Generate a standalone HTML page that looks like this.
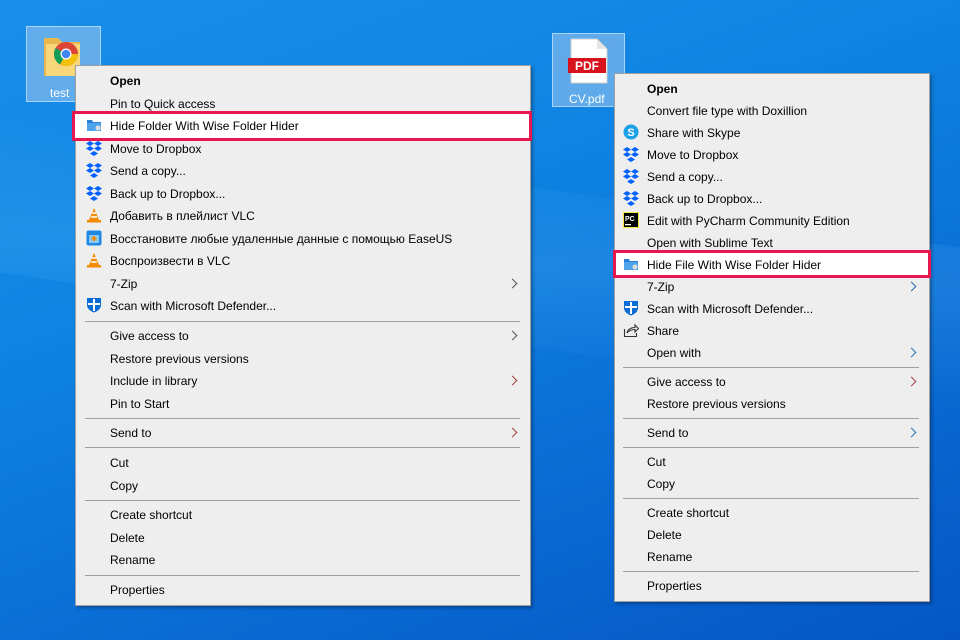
<!DOCTYPE html>
<html><head><meta charset="utf-8"><style>
*{margin:0;padding:0;box-sizing:border-box}
body{width:960px;height:640px;overflow:hidden;position:relative;font-family:"Liberation Sans",sans-serif;font-size:12px;color:#000;
background:linear-gradient(160deg,#1a8ee8 0%,#0f84e2 35%,#0a6fd6 65%,#0556c4 100%)}
.ray{position:absolute;left:0;top:180px;width:960px;height:160px;background:linear-gradient(175deg,rgba(120,200,255,0) 0%,rgba(120,200,255,.15) 50%,rgba(120,200,255,0) 100%);transform:skewY(8deg)}
.menu{position:absolute;background:#eeeeee;border:1px solid #a0a0a0;box-shadow:2px 2px 3px rgba(0,0,0,.3)}
.t{position:absolute;line-height:22px;padding-top:1px;white-space:nowrap}
.sep{position:absolute;height:1px;background:#a0a0a0}
.hl{position:absolute;border:3px solid #e8174f;background:#fff}
.ic{position:absolute;width:16px;height:16px}
.arr{position:absolute;width:7px;height:7px;border-top:1.3px solid #555;border-right:1.3px solid #555;transform:rotate(45deg)}
.sel{position:absolute;background:rgba(160,200,240,.55);border:1px solid rgba(200,230,255,.7)}
.lbl{position:absolute;color:#fff;font-size:12px;text-align:center}
</style></head><body>
<div class="ray"></div>

<div class="sel" style="left:26px;top:26px;width:75px;height:76px"></div>
<svg style="position:absolute;left:42px;top:30px" width="42" height="48"><path d="M2 8h14l4 4h18v34H2z" fill="#e9b94d"/><path d="M4 14h34v32H4z" fill="#f8d77a"/><circle cx="24" cy="24" r="12" fill="#db4437"/><path d="M24 24 L36 24 A12 12 0 0 1 18 34.4Z" fill="#f4c20d"/><path d="M24 24 L18 34.4 A12 12 0 0 1 13.6 18Z" fill="#0f9d58"/><circle cx="24" cy="24" r="5.5" fill="#fff"/><circle cx="24" cy="24" r="4.3" fill="#4285f4"/></svg>
<div class="lbl" style="left:50px;top:86px">test</div>

<div class="sel" style="left:552px;top:33px;width:73px;height:74px"></div>
<svg style="position:absolute;left:568px;top:38px" width="42" height="46"><path d="M3 1h26l10 10v34H3z" fill="#fff" stroke="#ccc"/><path d="M29 1v10h10" fill="#e5e5e5"/><rect x="0" y="20" width="38" height="15" fill="#d8121c"/><text x="19" y="32" fill="#fff" font-family="Liberation Sans" font-weight="bold" font-size="12" text-anchor="middle">PDF</text></svg>
<div class="lbl" style="left:569px;top:92px">CV.pdf</div>

<div class="menu" style="left:75px;top:65px;width:456px;height:541px"></div>
<div class="hl" style="left:72px;top:111px;width:460px;height:30px"></div>
<div class="t" style="left:110px;top:69px;font-weight:bold">Open</div>
<div class="t" style="left:110px;top:92px">Pin to Quick access</div>
<div class="t" style="left:110px;top:114px">Hide Folder With Wise Folder Hider</div>
<div class="t" style="left:110px;top:137px">Move to Dropbox</div>
<div class="t" style="left:110px;top:159px">Send a copy...</div>
<div class="t" style="left:110px;top:182px">Back up to Dropbox...</div>
<div class="t" style="left:110px;top:204px">Добавить в плейлист VLC</div>
<div class="t" style="left:110px;top:227px">Восстановите любые удаленные данные с помощью EaseUS</div>
<div class="t" style="left:110px;top:249px">Воспроизвести в VLC</div>
<div class="t" style="left:110px;top:272px">7-Zip</div>
<div class="t" style="left:110px;top:294px">Scan with Microsoft Defender...</div>
<div class="sep" style="left:85px;top:321px;width:435px"></div>
<div class="t" style="left:110px;top:324px">Give access to</div>
<div class="t" style="left:110px;top:347px">Restore previous versions</div>
<div class="t" style="left:110px;top:369px">Include in library</div>
<div class="t" style="left:110px;top:392px">Pin to Start</div>
<div class="sep" style="left:85px;top:418px;width:435px"></div>
<div class="t" style="left:110px;top:421px">Send to</div>
<div class="sep" style="left:85px;top:447px;width:435px"></div>
<div class="t" style="left:110px;top:451px">Cut</div>
<div class="t" style="left:110px;top:474px">Copy</div>
<div class="sep" style="left:85px;top:500px;width:435px"></div>
<div class="t" style="left:110px;top:503px">Create shortcut</div>
<div class="t" style="left:110px;top:526px">Delete</div>
<div class="t" style="left:110px;top:548px">Rename</div>
<div class="sep" style="left:85px;top:575px;width:435px"></div>
<div class="t" style="left:110px;top:578px">Properties</div>
<div class="arr" style="left:509px;top:280px"></div>
<div class="arr" style="left:509px;top:332px"></div>
<div class="arr" style="left:509px;top:377px;border-color:#a04040"></div>
<div class="arr" style="left:509px;top:429px;border-color:#a04040"></div>

<svg class="ic" style="left:86px;top:117px" viewBox="0 0 16 16"><path d="M1 3h5l1 2h8v9H1z" fill="#2a7fd4"/><path d="M1 6h14v8H1z" fill="#4fa3ea"/><circle cx="12" cy="11" r="2.5" fill="#ddd"/></svg>
<svg class="ic" style="left:86px;top:140px" viewBox="0 0 16 16"><g fill="#0061fe"><path d="M4 1l4 2.5-4 2.5-4-2.5zM12 1l4 2.5-4 2.5-4-2.5zM4 6l4 2.5-4 2.5-4-2.5zM12 6l4 2.5-4 2.5-4-2.5zM8 11l4 2.5-4 2.5-4-2.5z"/></g></svg>
<svg class="ic" style="left:86px;top:162px" viewBox="0 0 16 16"><g fill="#0061fe"><path d="M4 1l4 2.5-4 2.5-4-2.5zM12 1l4 2.5-4 2.5-4-2.5zM4 6l4 2.5-4 2.5-4-2.5zM12 6l4 2.5-4 2.5-4-2.5zM8 11l4 2.5-4 2.5-4-2.5z"/></g></svg>
<svg class="ic" style="left:86px;top:185px" viewBox="0 0 16 16"><g fill="#0061fe"><path d="M4 1l4 2.5-4 2.5-4-2.5zM12 1l4 2.5-4 2.5-4-2.5zM4 6l4 2.5-4 2.5-4-2.5zM12 6l4 2.5-4 2.5-4-2.5zM8 11l4 2.5-4 2.5-4-2.5z"/></g></svg>
<svg class="ic" style="left:86px;top:207px" viewBox="0 0 16 16"><path d="M8 1l5 12H3z" fill="#f28a00"/><path d="M6 6h4M5 10h6" stroke="#fff" stroke-width="1.5"/><rect x="1" y="13" width="14" height="2.5" fill="#f28a00"/></svg>
<svg class="ic" style="left:86px;top:230px" viewBox="0 0 16 16"><rect x="0.5" y="0.5" width="15" height="15" rx="2" fill="#1e88e5"/><rect x="3" y="5" width="10" height="8" fill="#8ec8f5"/><path d="M8 6v5M5.5 8.5h5" stroke="#f28a00" stroke-width="2"/></svg>
<svg class="ic" style="left:86px;top:252px" viewBox="0 0 16 16"><path d="M8 1l5 12H3z" fill="#f28a00"/><path d="M6 6h4M5 10h6" stroke="#fff" stroke-width="1.5"/><rect x="1" y="13" width="14" height="2.5" fill="#f28a00"/></svg>
<svg class="ic" style="left:86px;top:297px" viewBox="0 0 16 16"><path d="M1 1h14v7c0 4-4 6.5-7 7.5C5 14.5 1 12 1 8z" fill="#0a6cd6"/><path d="M8 2v12M2 7h12" stroke="#fff" stroke-width="2"/></svg>

<div class="menu" style="left:614px;top:73px;width:316px;height:529px"></div>
<div class="hl" style="left:613px;top:250px;width:318px;height:28px"></div>
<div class="t" style="left:647px;top:77px;font-weight:bold">Open</div>
<div class="t" style="left:647px;top:99px">Convert file type with Doxillion</div>
<div class="t" style="left:647px;top:121px">Share with Skype</div>
<div class="t" style="left:647px;top:143px">Move to Dropbox</div>
<div class="t" style="left:647px;top:165px">Send a copy...</div>
<div class="t" style="left:647px;top:187px">Back up to Dropbox...</div>
<div class="t" style="left:647px;top:209px">Edit with PyCharm Community Edition</div>
<div class="t" style="left:647px;top:231px">Open with Sublime Text</div>
<div class="t" style="left:647px;top:253px">Hide File With Wise Folder Hider</div>
<div class="t" style="left:647px;top:275px">7-Zip</div>
<div class="t" style="left:647px;top:297px">Scan with Microsoft Defender...</div>
<div class="t" style="left:647px;top:319px">Share</div>
<div class="t" style="left:647px;top:341px">Open with</div>
<div class="sep" style="left:623px;top:367px;width:296px"></div>
<div class="t" style="left:647px;top:370px">Give access to</div>
<div class="t" style="left:647px;top:392px">Restore previous versions</div>
<div class="sep" style="left:623px;top:418px;width:296px"></div>
<div class="t" style="left:647px;top:421px">Send to</div>
<div class="sep" style="left:623px;top:447px;width:296px"></div>
<div class="t" style="left:647px;top:450px">Cut</div>
<div class="t" style="left:647px;top:472px">Copy</div>
<div class="sep" style="left:623px;top:498px;width:296px"></div>
<div class="t" style="left:647px;top:501px">Create shortcut</div>
<div class="t" style="left:647px;top:523px">Delete</div>
<div class="t" style="left:647px;top:545px">Rename</div>
<div class="sep" style="left:623px;top:571px;width:296px"></div>
<div class="t" style="left:647px;top:574px">Properties</div>
<div class="arr" style="left:908px;top:283px;border-color:#2a6fb5"></div>
<div class="arr" style="left:908px;top:349px;border-color:#2a6fb5"></div>
<div class="arr" style="left:908px;top:378px;border-color:#a04040"></div>
<div class="arr" style="left:908px;top:429px;border-color:#2a6fb5"></div>

<svg class="ic" style="left:623px;top:124px" viewBox="0 0 16 16"><circle cx="8" cy="8" r="7.5" fill="#1ca0e8"/><text x="8" y="12" fill="#fff" font-family="Liberation Sans" font-weight="bold" font-size="11" text-anchor="middle">S</text></svg>
<svg class="ic" style="left:623px;top:146px" viewBox="0 0 16 16"><g fill="#0061fe"><path d="M4 1l4 2.5-4 2.5-4-2.5zM12 1l4 2.5-4 2.5-4-2.5zM4 6l4 2.5-4 2.5-4-2.5zM12 6l4 2.5-4 2.5-4-2.5zM8 11l4 2.5-4 2.5-4-2.5z"/></g></svg>
<svg class="ic" style="left:623px;top:168px" viewBox="0 0 16 16"><g fill="#0061fe"><path d="M4 1l4 2.5-4 2.5-4-2.5zM12 1l4 2.5-4 2.5-4-2.5zM4 6l4 2.5-4 2.5-4-2.5zM12 6l4 2.5-4 2.5-4-2.5zM8 11l4 2.5-4 2.5-4-2.5z"/></g></svg>
<svg class="ic" style="left:623px;top:190px" viewBox="0 0 16 16"><g fill="#0061fe"><path d="M4 1l4 2.5-4 2.5-4-2.5zM12 1l4 2.5-4 2.5-4-2.5zM4 6l4 2.5-4 2.5-4-2.5zM12 6l4 2.5-4 2.5-4-2.5zM8 11l4 2.5-4 2.5-4-2.5z"/></g></svg>
<svg class="ic" style="left:623px;top:212px" viewBox="0 0 16 16"><rect x="0.5" y="0.5" width="15" height="15" fill="#000" stroke="#f5e642"/><text x="2" y="9" fill="#fff" font-family="Liberation Sans" font-weight="bold" font-size="7">PC</text><rect x="2" y="12" width="6" height="1.3" fill="#fff"/></svg>
<svg class="ic" style="left:623px;top:256px" viewBox="0 0 16 16"><path d="M1 3h5l1 2h8v9H1z" fill="#2a7fd4"/><path d="M1 6h14v8H1z" fill="#4fa3ea"/><circle cx="12" cy="11" r="2.5" fill="#ddd"/></svg>
<svg class="ic" style="left:623px;top:300px" viewBox="0 0 16 16"><path d="M1 1h14v7c0 4-4 6.5-7 7.5C5 14.5 1 12 1 8z" fill="#0a6cd6"/><path d="M8 2v12M2 7h12" stroke="#fff" stroke-width="2"/></svg>
<svg class="ic" style="left:623px;top:322px" viewBox="0 0 16 16"><path d="M1.5 7v7.5h12V11" fill="none" stroke="#333" stroke-width="1.1"/><path d="M4 11c1-4 4-5.5 8-5.5V3l3.5 3.5L12 10V7.5C8.5 7.5 6 8.5 4 11z" fill="none" stroke="#333" stroke-width="1.1"/></svg>
</body></html>
